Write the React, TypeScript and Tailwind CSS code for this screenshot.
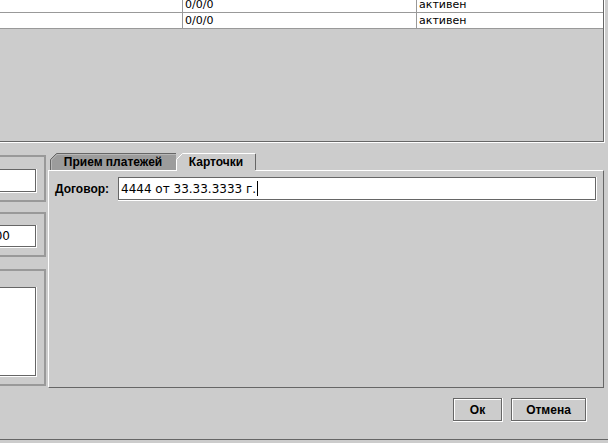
import React from "react";

const BOLD = "font-['Liberation_Sans',Arial,sans-serif] font-bold text-[12px]";

function Field({ className = "", children }: { className?: string; children?: React.ReactNode }) {
  return (
    <div className={"border-r border-b border-white " + className}>
      <div className="h-full border border-[#666] bg-white flex items-center overflow-hidden whitespace-nowrap">
        {children}
      </div>
    </div>
  );
}

function Button({ w, label }: { w: string; label: string }) {
  return (
    <div className={"h-[24px] border-r border-b border-white " + w}>
      <div className={"h-full border border-[#666] shadow-[inset_1px_1px_0_#fff] flex items-center justify-center " + BOLD}>
        {label}
      </div>
    </div>
  );
}

export default function App() {
  const rows = [0, 1];
  return (
    <div className="w-[608px] h-[443px] bg-[#cccccc] overflow-hidden flex flex-col text-black font-['DejaVu_Sans',sans-serif]">
      {/* table scroll pane */}
      <div className="h-[143px] w-[605px] shrink-0 border-r border-b border-white">
        <div className="h-full border-r border-b border-[#666] overflow-hidden">
          <div className="-mt-[3px] w-[603px] bg-white">
            {rows.map((r) => (
              <div key={r} className="flex h-[16px] border-b border-[#999] text-[11px] leading-[15px]">
                <div className="w-[183px] shrink-0 border-r border-[#999]" />
                <div className="w-[234px] shrink-0 border-r border-[#999] pl-[2px]">0/0/0</div>
                <div className="flex-1 pl-[2px]">активен</div>
              </div>
            ))}
          </div>
        </div>
      </div>

      {/* middle */}
      <div className="flex h-[245px] shrink-0">
        <div className="ml-[-100px] w-[146px] shrink-0 pt-[12px] flex flex-col">
          <div className="h-[47px] border-2 border-[#999] pt-[12px] pr-[7px]">
            <Field className="h-[24px]" />
          </div>
          <div className="mt-[10px] h-[45px] border-2 border-[#999] pt-[11px] pr-[7px]">
            <Field className="h-[23px]">
              <span className="pl-[84px] text-[12px]">100</span>
            </Field>
          </div>
          <div className="mt-[12px] h-[117px] border-2 border-[#999] pt-[16px] pr-[7px]">
            <Field className="h-[90px]" />
          </div>
        </div>

        <div className="ml-[2px] pt-[10px] flex flex-col">
          <div className="relative z-10 flex h-[17px] pl-[2px] items-start">
            <div className="relative w-[126px] h-[17px] flex items-center justify-center">
              <svg className="absolute inset-0" width="126" height="17" viewBox="0 0 126 17">
                <path d="M0.5 17 V6.5 L6.5 0.5 H126 V17 Z" fill="#9c9c9c" />
                <path d="M1.5 17 V7 L7 1.5 H126" fill="none" stroke="#b8b8b8" />
                <path d="M0.5 17 V6.5 L6.5 0.5 H126" fill="none" stroke="#666" />
              </svg>
              <span className={"relative leading-none " + BOLD}>Прием платежей</span>
            </div>
            <div className="relative w-[80px] h-[18px] flex items-center justify-center pb-[1px]">
              <svg className="absolute inset-0" width="80" height="18" viewBox="0 0 80 18">
                <path d="M0.5 18 V6.5 L6.5 0.5 H79.5 V18 Z" fill="#cccccc" />
                <path d="M0.5 18 V6.5 L6.5 0.5 H79" fill="none" stroke="#ffffff" />
                <path d="M79.5 1 V17" fill="none" stroke="#666" />
              </svg>
              <span className={"relative leading-none " + BOLD}>Карточки</span>
            </div>
          </div>
          <div className="w-[556px] h-[218px] border-t border-l border-white border-r border-b border-r-[#666] border-b-[#666] pt-[6px] pl-[6px] pr-[6px]">
            <div className="flex items-center h-[24px]">
              <div className={"w-[63px] shrink-0 " + BOLD}>Договор:</div>
              <Field className="flex-1 h-[24px]">
                <span className="pl-[2px] text-[12px]">4444 от 33.33.3333 г.</span>
                <span className="ml-[1px] w-[1px] h-[15px] bg-black" />
              </Field>
            </div>
          </div>
        </div>
      </div>

      {/* buttons */}
      <div className="flex justify-end gap-[8px] pt-[10px] pr-[21px] shrink-0">
        <Button w="w-[50px]" label="Ок" />
        <Button w="w-[76px]" label="Отмена" />
      </div>
      <div className="h-[18px] shrink-0 border-b border-[#666]" />
      <div className="h-[3px] shrink-0" />
    </div>
  );
}
